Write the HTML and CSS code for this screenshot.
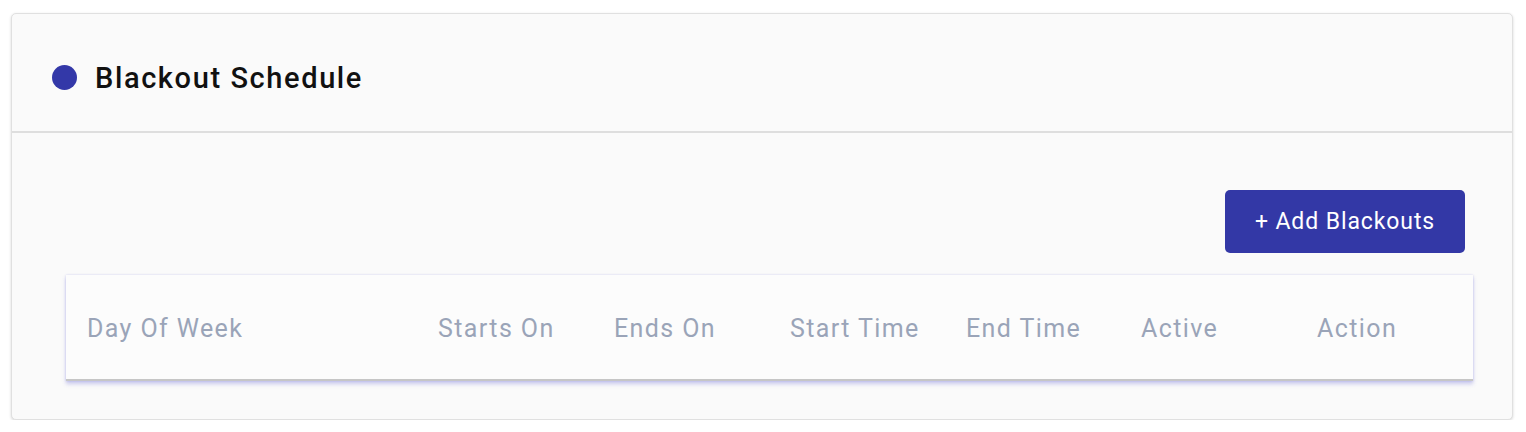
FILE: index.html
```html
<!DOCTYPE html>
<html>
<head>
<meta charset="utf-8">
<link rel="stylesheet" href="styles.css">
</head>
<body>
<div class="card">
  <div class="card-header">
    <span class="dot"></span>
    <h2 class="title">Blackout Schedule</h2>
  </div>
  <div class="card-body">
    <div class="toolbar">
      <button class="btn-add">+ Add Blackouts</button>
    </div>
    <div class="table">
      <div class="thead">
        <div class="th">Day Of Week</div>
        <div class="th">Starts On</div>
        <div class="th">Ends On</div>
        <div class="th">Start Time</div>
        <div class="th">End Time</div>
        <div class="th">Active</div>
        <div class="th">Action</div>
      </div>
    </div>
  </div>
</div>
</body>
</html>
```
FILE: styles.css
```css
* { box-sizing: border-box; }
html, body { margin: 0; background: #ffffff; }
body {
  padding: 13px 13px 0 11px;
  font-family: Roboto, "Liberation Sans", Arial, sans-serif;
}
.card {
  width: 1502px;
  height: 407px;
  background: #fafafa;
  border: 1px solid #e0e0e0;
  border-radius: 5px;
  box-shadow: 0 1px 3px rgba(0,0,0,0.16);
}
.card-header {
  height: 119px;
  display: flex;
  align-items: center;
  padding-left: 40px;
  padding-top: 10px;
  border-bottom: 2px solid #dedede;
}
.dot {
  width: 25px;
  height: 25px;
  border-radius: 50%;
  background: #3338a8;
  flex: none;
}
.title {
  margin: 0 0 0 18px;
  font-size: 29px;
  font-weight: 500;
  letter-spacing: 1.6px;
  color: #111111;
  line-height: 1;
  position: relative;
  top: 1px;
}
.card-body {
  padding: 57px 39px 0 54px;
}
.toolbar {
  display: flex;
  justify-content: flex-end;
  padding-right: 8px;
}
.btn-add {
  width: 240px;
  height: 63px;
  background: #3338a6;
  color: #ffffff;
  border: none;
  border-radius: 5px;
  font-family: Roboto, "Liberation Sans", Arial, sans-serif;
  font-size: 23px;
  letter-spacing: 0.9px;
  font-weight: 400;
  padding: 0;
}
.table {
  margin-top: 22px;
  width: 1407px;
  background: #fcfcfc;
  border-bottom: 2px solid #c6c6c6;
  box-shadow: 0 3px 4px rgba(90, 90, 210, 0.3), 0 0 2px rgba(90, 90, 210, 0.25);
}
.thead {
  height: 104px;
  display: grid;
  grid-template-columns: 351px 176px 176px 176px 175px 176px 1fr;
  align-items: center;
  padding-left: 21px;
}
.th {
  font-size: 25px;
  letter-spacing: 1.4px;
  color: #9aa4b8;
  font-weight: 400;
  position: relative;
  top: 1px;
}
```
